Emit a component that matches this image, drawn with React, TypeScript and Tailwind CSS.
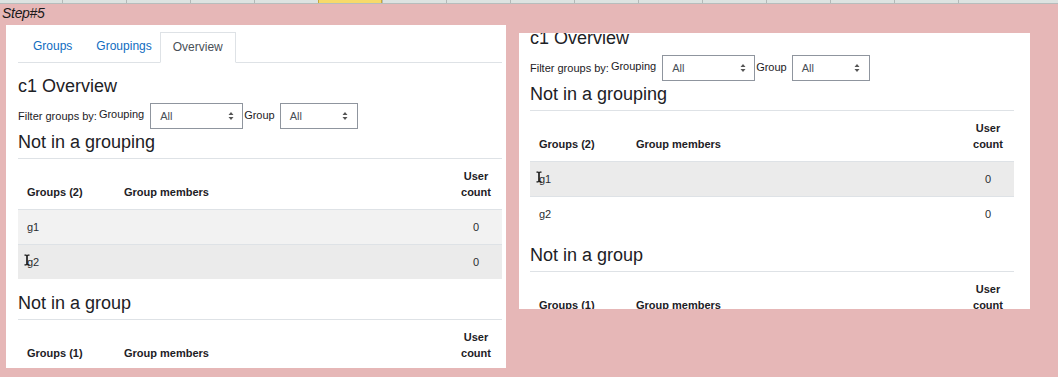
import React from "react";

const Arrows = () => (
  <svg width="6" height="10" viewBox="0 0 6 10">
    <path d="M3 1L5.5 4H0.5Z M3 9L0.5 6H5.5Z" fill="#555" />
  </svg>
);

const IBeam = () => (
  <svg width="6" height="12" viewBox="0 0 6 12" className="absolute left-[-3px] top-[-2px]">
    <path d="M0.5 0.5H2.3L3 1.2L3.7 0.5H5.5V1.8H3.8V10.2H5.5V11.5H3.7L3 10.8L2.3 11.5H0.5V10.2H2.2V1.8H0.5Z" fill="#111" />
  </svg>
);

function Select({ w, pr }: { w: string; pr: string }) {
  return (
    <div className={`${w} ${pr} h-[26px] border border-[#8f959e] flex items-center justify-between pl-[9px] text-[11px] text-[#495057] bg-white`}>
      <span>All</span>
      <Arrows />
    </div>
  );
}

function Table({ count, rows }: { count: number; rows: { name: string; bg: string; cursor?: boolean }[] }) {
  return (
    <table className="w-[484px] table-fixed border-collapse text-[11px] leading-[16px] text-[#1d2125] mb-[10px]">
      <colgroup>
        <col className="w-[97px]" />
        <col />
        <col className="w-[52px]" />
      </colgroup>
      <thead>
        <tr className="border-b border-[#dee2e6]">
          <th className="p-[9px] text-left align-bottom font-bold">Groups ({count})</th>
          <th className="p-[9px] text-left align-bottom font-bold">Group members</th>
          <th className="p-[9px] text-center align-bottom font-bold">User count</th>
        </tr>
      </thead>
      <tbody>
        {rows.map((r) => (
          <tr key={r.name} className={`${r.bg} border-t border-[#dee2e6]`}>
            <td className="p-[9px] text-[#2a2d31]">
              <span className="relative">
                {r.cursor && <IBeam />}
                {r.name}
              </span>
            </td>
            <td className="p-[9px]"></td>
            <td className="p-[9px] text-center text-[#2a2d31]">0</td>
          </tr>
        ))}
      </tbody>
    </table>
  );
}

function Content({ rows }: { rows: { name: string; bg: string; cursor?: boolean }[] }) {
  return (
    <div className="w-[484px]">
      <h2 className="text-[18px] leading-[22px] h-[22px] text-[#1d2125]">c1 Overview</h2>
      <div className="mt-[6px] flex items-center h-[26px] text-[#1d2125] text-[11px]">
        <span>Filter groups by:</span>
        <span className="ml-[2px] mr-[6px] mb-[3px]">Grouping</span>
        <Select w="w-[93px]" pr="pr-[8px]" />
        <span className="ml-[1px] mr-[5px] mb-[2px]">Group</span>
        <Select w="w-[78px]" pr="pr-[9px]" />
      </div>
      <h3 className="mt-[2px] text-[18px] leading-[22px] text-[#1d2125]">Not in a grouping</h3>
      <div className="mt-[5px] h-px bg-[#dee2e6]" />
      <Table count={2} rows={rows} />
      <h3 className="mt-[13px] text-[18px] leading-[22px] text-[#1d2125]">Not in a group</h3>
      <div className="mt-[5px] h-px bg-[#dee2e6]" />
      <Table count={1} rows={[]} />
    </div>
  );
}

export default function App() {
  const cells = Array.from({ length: 15 }, (_, i) => i);
  return (
    <div className="w-[1058px] h-[377px] bg-[#e6b7b7] overflow-hidden font-['Liberation_Sans',Arial,sans-serif]">
      <div className="h-[4px] flex bg-[#dde3e1] border-b border-[#b7bdbc]">
        <div className="w-[62px] shrink-0" />
        {cells.map((i) => (
          <div
            key={i}
            className={`w-[64px] shrink-0 border-l ${i === 4 ? "bg-[#f7da6a] border-r border-[#c9a93c]" : "border-[#b3b9b8]"}`}
          />
        ))}
      </div>
      <div className="h-[21px] leading-[19px] pl-[2px] text-[14px] italic tracking-[-0.3px] text-[#1a1a1a]">Step#5</div>
      <div className="flex items-start">
        <div className="ml-[6px] w-[500px] h-[343px] bg-white overflow-hidden pt-[7px] pl-[12px]">
          <div className="w-[484px] flex border-b border-[#dee2e6] pl-[3px] text-[12px] leading-[17px]">
            <div className="px-[12px] py-[6px] text-[#0f6cbf]">Groups</div>
            <div className="pl-[12px] pr-[8px] py-[6px] text-[#0f6cbf]">Groupings</div>
            <div className="px-[12px] py-[6px] text-[#495057] border border-[#dee2e6] border-b-white -mb-px">Overview</div>
          </div>
          <div className="mt-[12px]">
            <Content
              rows={[
                { name: "g1", bg: "bg-[#f2f2f2]" },
                { name: "g2", bg: "bg-[#ebebeb]", cursor: true },
              ]}
            />
          </div>
        </div>
        <div className="ml-[13px] mt-[8px] w-[511px] h-[276px] bg-white overflow-hidden pl-[11px]">
          <div className="mt-[-6px]">
            <Content
              rows={[
                { name: "g1", bg: "bg-[#ebebeb]", cursor: true },
                { name: "g2", bg: "bg-white" },
              ]}
            />
          </div>
        </div>
      </div>
    </div>
  );
}
